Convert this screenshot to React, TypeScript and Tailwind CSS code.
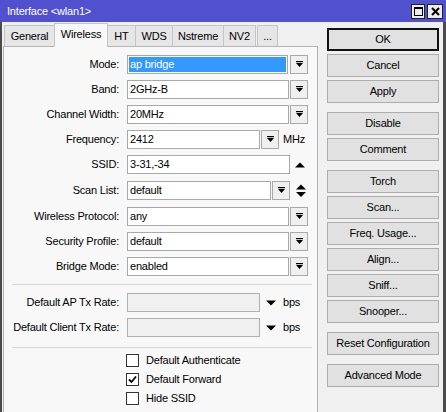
import React from "react";

function DropIcon() {
  return (
    <svg width="7" height="7" viewBox="0 0 7 7">
      <rect x="0" y="0" width="7" height="1.2" fill="#000" />
      <polygon points="0,2 7,2 3.5,6" fill="#000" />
    </svg>
  );
}

function DropBtn({ cls = "ml-[1px]" }: { cls?: string }) {
  return (
    <div className={`flex h-[19px] w-[18px] items-center justify-center border border-[#a9a9a9] bg-[#f0f0f0] ${cls}`}>
      <DropIcon />
    </div>
  );
}

function Input({ value, w }: { value: string; w: string }) {
  return (
    <div className={`flex h-[19px] items-center border border-[#a9a9a9] bg-white px-[2px] ${w}`}>{value}</div>
  );
}

function Row({ label, children, cls = "" }: { label: string; children: React.ReactNode; cls?: string }) {
  return (
    <div className={`flex h-[19px] items-center ${cls}`}>
      <div className="w-[115px] whitespace-nowrap text-right">{label}</div>
      <div className="ml-[8px] flex items-center">{children}</div>
    </div>
  );
}

function UpArrow() {
  return (
    <svg width="10" height="6" viewBox="0 0 10 6">
      <polygon points="0,5.5 10,5.5 5,0.5" fill="#000" />
    </svg>
  );
}

function UpDown() {
  return (
    <svg width="10" height="14" viewBox="0 0 10 14">
      <polygon points="0,5.5 10,5.5 5,0.5" fill="#000" />
      <polygon points="0,8 10,8 5,13" fill="#000" />
    </svg>
  );
}

function DownSmall() {
  return (
    <svg width="10" height="6" viewBox="0 0 10 6">
      <polygon points="0,0.5 10,0.5 5,5.5" fill="#000" />
    </svg>
  );
}

function Check({ label, checked }: { label: string; checked?: boolean }) {
  return (
    <div className="flex h-[19px] items-center">
      <div className="ml-[122px] flex h-[13px] w-[13px] items-center justify-center border border-[#333] bg-white">
        {checked && (
          <svg width="9" height="9" viewBox="0 0 9 9">
            <polyline points="1,4.5 3.5,7 8,1.5" fill="none" stroke="#000" strokeWidth="1.8" />
          </svg>
        )}
      </div>
      <div className="ml-[7px]">{label}</div>
    </div>
  );
}

function Btn({ label, cls = "mt-[3px]", def }: { label: string; cls?: string; def?: boolean }) {
  return (
    <div
      className={`flex h-[23px] w-[112px] items-center justify-center bg-[#e1e1e1] ${
        def ? "border-2 border-[#111]" : "border border-[#adadad]"
      } ${cls}`}
    >
      {label}
    </div>
  );
}

export default function App() {
  const tabBase = "flex h-[21px] mb-[1px] items-center justify-center border-t border-[#c4c4c4] bg-[#e6e6e6]";
  return (
    <div className="h-[412px] w-[446px] overflow-hidden bg-[#f0f0f0] font-['Liberation_Sans',Arial,sans-serif] text-[11px] tracking-[-0.2px] text-black">
      {/* Title bar */}
      <div className="flex h-[22px] items-center bg-[#5151d0] pl-[7px] pr-[3px]">
        <div className="text-white">Interface &lt;wlan1&gt;</div>
        <div className="ml-auto flex items-center gap-[2px]">
          <div className="flex h-[15px] w-[14px] items-center justify-center border border-[#222] bg-[#ececec]">
            <div className="h-[9px] w-[9px] border border-t-2 border-[#000]" />
          </div>
          <div className="flex h-[15px] w-[16px] items-center justify-center border border-[#222] bg-[#ececec]">
            <svg width="9" height="9" viewBox="0 0 9 9">
              <path d="M1 1 L8 8 M8 1 L1 8" stroke="#000" strokeWidth="2" />
            </svg>
          </div>
        </div>
      </div>

      {/* Body */}
      <div className="flex h-[390px] border-l-2 border-r-[3px] border-[#4a4a4a]">
        {/* Left column */}
        <div className="ml-[1px] flex w-[315px] flex-col">
          <div className="mt-[1px] flex h-[24px] items-end pl-[1px]">
            <div className={`${tabBase} w-[50px] border-l`}>General</div>
            <div className="relative z-10 flex h-[24px] w-[54px] items-center justify-center border-x border-t border-[#c4c4c4] bg-[#f8f8f8] pb-[2px]">
              Wireless
            </div>
            <div className={`${tabBase} w-[27px]`}>HT</div>
            <div className={`${tabBase} w-[37px] border-l`}>WDS</div>
            <div className={`${tabBase} w-[51px] border-l`}>Nstreme</div>
            <div className={`${tabBase} w-[33px] border-x`}>NV2</div>
            <div className={`${tabBase} ml-[1px] w-[21px] border-x`}>...</div>
          </div>
          <div className="-mt-[1px] h-[380px] border-x border-t border-[#b4b4b4] bg-[#f8f8f8] pt-[8px]">
            <Row label="Mode:">
              <div className="h-[19px] w-[161px] border border-[#a9a9a9] bg-white p-[1px]">
                <div className="flex h-full items-center bg-[#3399ff] pl-[1px] text-white">ap bridge</div>
              </div>
              <DropBtn cls="ml-[2px]" />
            </Row>
            <Row label="Band:" cls="mt-[6px]">
              <Input value="2GHz-B" w="w-[162px]" />
              <DropBtn />
            </Row>
            <Row label="Channel Width:" cls="mt-[6px]">
              <Input value="20MHz" w="w-[162px]" />
              <DropBtn />
            </Row>
            <Row label="Frequency:" cls="mt-[6px]">
              <Input value="2412" w="w-[133px]" />
              <DropBtn />
              <div className="ml-[4px]">MHz</div>
            </Row>
            <Row label="SSID:" cls="mt-[6px]">
              <Input value="3-31,-34" w="w-[163px]" />
              <div className="ml-[5px]">
                <UpArrow />
              </div>
            </Row>
            <Row label="Scan List:" cls="mt-[7px]">
              <Input value="default" w="w-[144px]" />
              <DropBtn />
              <div className="ml-[6px] flex items-center">
                <UpDown />
              </div>
            </Row>
            <Row label="Wireless Protocol:" cls="mt-[7px]">
              <Input value="any" w="w-[162px]" />
              <DropBtn />
            </Row>
            <Row label="Security Profile:" cls="mt-[6px]">
              <Input value="default" w="w-[162px]" />
              <DropBtn />
            </Row>
            <Row label="Bridge Mode:" cls="mt-[6px]">
              <Input value="enabled" w="w-[162px]" />
              <DropBtn />
            </Row>

            <div className="ml-[8px] mr-[5px] mt-[8px] border-t border-[#d6d6d6]" />

            <Row label="Default AP Tx Rate:" cls="mt-[8px]">
              <div className="h-[19px] w-[133px] border border-[#b0b0b0] bg-[#f0f0f0]" />
              <div className="ml-[6px] flex items-center">
                <DownSmall />
              </div>
              <div className="ml-[7px]">bps</div>
            </Row>
            <Row label="Default Client Tx Rate:" cls="mt-[6px]">
              <div className="h-[19px] w-[133px] border border-[#b0b0b0] bg-[#f0f0f0]" />
              <div className="ml-[6px] flex items-center">
                <DownSmall />
              </div>
              <div className="ml-[7px]">bps</div>
            </Row>

            <div className="ml-[8px] mr-[5px] mt-[10px] border-t border-[#d6d6d6]" />

            <div className="mt-[3px]">
              <Check label="Default Authenticate" />
              <Check label="Default Forward" checked />
              <Check label="Hide SSID" />
            </div>
          </div>
        </div>

        {/* Right buttons */}
        <div className="ml-[9px] flex flex-col pt-[6px]">
          <Btn label="OK" def cls="" />
          <Btn label="Cancel" />
          <Btn label="Apply" />
          <Btn label="Disable" cls="mt-[9px]" />
          <Btn label="Comment" />
          <Btn label="Torch" cls="mt-[9px]" />
          <Btn label="Scan..." />
          <Btn label="Freq. Usage..." />
          <Btn label="Align..." />
          <Btn label="Sniff..." />
          <Btn label="Snooper..." />
          <Btn label="Reset Configuration" cls="mt-[9px]" />
          <Btn label="Advanced Mode" cls="mt-[9px]" />
        </div>
      </div>
    </div>
  );
}
